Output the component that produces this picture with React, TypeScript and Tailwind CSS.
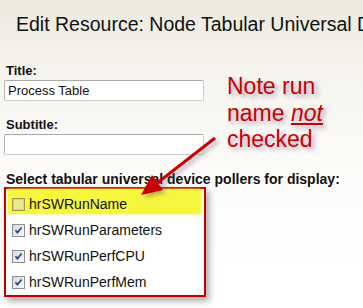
import React from "react";

const pollers = [
  { name: "hrSWRunName", checked: false },
  { name: "hrSWRunParameters", checked: true },
  { name: "hrSWRunPerfCPU", checked: true },
  { name: "hrSWRunPerfMem", checked: true },
];

function CheckBox({ checked }: { checked: boolean }) {
  if (!checked) {
    return (
      <svg width="13" height="13" viewBox="0 0 13 13" className="shrink-0">
        <rect x="0.5" y="0.5" width="12" height="12" fill="#e9e98a" stroke="#9a9a52" />
        <rect x="1.5" y="1.5" width="10" height="10" fill="none" stroke="#d6d67a" />
      </svg>
    );
  }
  return (
    <svg width="13" height="13" viewBox="0 0 13 13" className="shrink-0">
      <defs>
        <linearGradient id="cbg" x1="0" y1="0" x2="1" y2="1">
          <stop offset="0" stopColor="#d9d9d9" />
          <stop offset="1" stopColor="#fbfbfb" />
        </linearGradient>
      </defs>
      <rect x="0.5" y="0.5" width="12" height="12" fill="url(#cbg)" stroke="#8c8f96" />
      <path d="M3.5 6.2 L5.4 8.6 L9.6 3.4" fill="none" stroke="#2c3f86" strokeWidth="1.6" />
    </svg>
  );
}

function TextInput({ value }: { value?: string }) {
  return (
    <div className="ml-[-2px] w-[200px] h-[21px] flex items-center pl-[3px] bg-white border border-[#cdcdcd] border-t-[#aaaaaa] border-l-[#b8b8b8] rounded-[2px] text-[13px] leading-[16px] text-[#111] pt-[1px]">
      {value}
    </div>
  );
}

export default function App() {
  return (
    <div
      className="relative w-[363px] h-[308px] overflow-hidden bg-[linear-gradient(to_bottom,#ece9de,#f6f4ee_70px,#fdfcfa_180px,#ffffff_260px)]"
      style={{ fontFamily: '"Liberation Sans", Arial, sans-serif' }}
    >
      <h1 className="mt-[13px] ml-[16px] text-[19.5px] leading-[23px] text-[#111] whitespace-nowrap">
        Edit Resource: Node Tabular Universal Device Poller
      </h1>

      <div className="pl-[6px]">
        <div className="mt-[27px] text-[13px] leading-[16px] font-bold text-[#111]">Title:</div>
        <div className="mt-[1px]">
          <TextInput value="Process Table" />
        </div>

        <div className="mt-[16px] text-[13px] leading-[16px] font-bold text-[#111]">Subtitle:</div>
        <div className="mt-[1px]">
          <TextInput />
        </div>

        <div className="mt-[16px] text-[14px] leading-[16px] font-bold text-[#111] whitespace-nowrap">
          Select tabular universal device pollers for display:
        </div>

        <div className="relative ml-[-2px] w-[202px] border-2 border-[#bf0000] bg-white pt-[2px] shadow-[3px_4px_7px_rgba(0,0,0,0.35)]">
          {/* highlight on the unchecked row */}
          <div className="absolute left-[2px] top-0 w-[193px] h-[25px] bg-[#f7f63e] shadow-[0_0_3px_#f7f63e]" />
          {pollers.map((p) => (
            <div key={p.name} className="relative flex items-center h-[26px] pl-[6px] gap-[4px]">
              <CheckBox checked={p.checked} />
              <span className="text-[14px] leading-[16px] text-[#111]">{p.name}</span>
            </div>
          ))}
        </div>
      </div>

      {/* callout */}
      <div className="absolute left-[227px] top-[73px] text-[23px] leading-[26.5px] text-[#c80000] [text-shadow:3px_3px_4px_rgba(90,60,120,0.45)]">
        <div>Note run</div>
        <div>
          name <span className="italic underline decoration-[2px] underline-offset-[2px]">not</span>
        </div>
        <div>checked</div>
      </div>

      <svg
        className="absolute left-0 top-0 pointer-events-none"
        width="363"
        height="308"
        style={{ filter: "drop-shadow(3px 3px 2px rgba(90,60,110,0.4))" }}
      >
        <line x1="215" y1="138" x2="156" y2="184" stroke="#c80000" strokeWidth="3" />
        <polygon points="141,195 163,190 152,175" fill="#c80000" />
      </svg>
    </div>
  );
}
